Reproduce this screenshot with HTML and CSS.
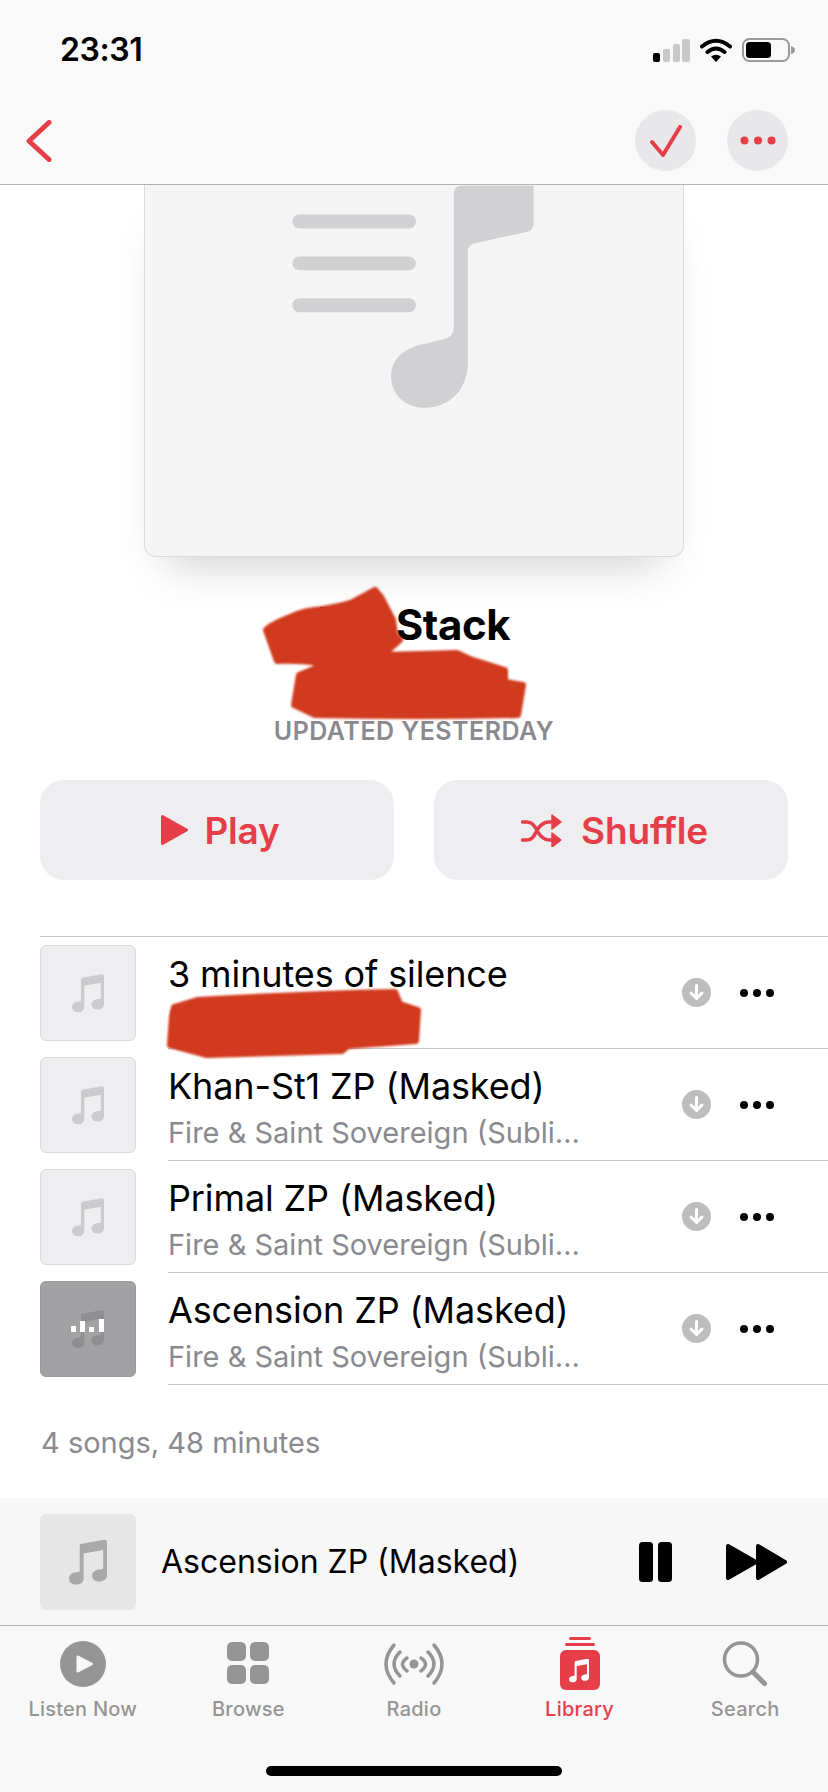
FILE: index.html
```html
<!DOCTYPE html>
<html lang="en">
<head>
<meta charset="utf-8">
<title>Stack</title>
<link rel="stylesheet" href="styles.css">
</head>
<body>
<svg class="defs" width="0" height="0" aria-hidden="true">
  <symbol id="note" viewBox="0 0 32 38">
    <path d="M9 5.500Q9 4 10.500 3.700L29.500 .2Q32 0 32 2V30C32 33.500 29 35.500 25.500 35.500C22 35.500 19.500 33.500 19.500 30.500C19.500 27.500 22 25.800 25 25.300L28 24.800C28.600 24.700 28.800 24.400 28.800 23.800V8.800L12.300 11.800V33C12.300 36 9.500 38 6.200 38C2.700 38 0 36 0 33C0 30 2.500 28.200 5.500 27.700L8.300 27.200C8.800 27.100 9 26.800 9 26.300Z"/>
  </symbol>
</svg>
<div class="app">
  <header class="top">
    <div class="status">
      <span class="time">23:31</span>
      <div class="status-icons">
        <svg class="signal" viewBox="0 0 37 23"><rect x="0" y="14" width="7" height="9" rx="2" fill="#000"/><rect x="10" y="10" width="7" height="13" rx="2" fill="#c8c8c8"/><rect x="20" y="5" width="7" height="18" rx="2" fill="#c8c8c8"/><rect x="29" y="0" width="8" height="23" rx="2" fill="#c8c8c8"/></svg>
        <svg class="wifi" viewBox="0 0 32 24"><path d="M2 8.500Q16-3 30 8.500M7.500 14Q16 7 24.500 14" fill="none" stroke="#000" stroke-width="4" stroke-linecap="round"/><path d="M11 18.500Q16 15 21 18.500L16 24Z" fill="#000"/></svg>
        <svg class="battery" viewBox="0 0 53 24"><rect x="1" y="1" width="46" height="22" rx="6.500" fill="none" stroke="#9a9a9a" stroke-width="2"/><rect x="4" y="4" width="25" height="16" rx="3.500" fill="#000"/><path d="M49 8Q53 9 53 12Q53 15 49 16Z" fill="#9a9a9a"/></svg>
      </div>
    </div>
    <nav class="nav">
      <svg class="back" viewBox="0 0 26 42"><path d="M23 2.500L3 21L23 39.500" fill="none" stroke="#e63e49" stroke-width="5" stroke-linecap="round" stroke-linejoin="round"/></svg>
      <div class="nav-actions">
        <span class="round-btn"><svg class="check" viewBox="0 0 32 32"><path d="M2 17L13 30L30 2" fill="none" stroke="#e63e49" stroke-width="4" stroke-linecap="round" stroke-linejoin="round"/></svg></span>
        <span class="round-btn"><svg class="nav-dots" viewBox="0 0 36 9"><circle cx="4.500" cy="4.500" r="4"/><circle cx="18" cy="4.500" r="4"/><circle cx="31.500" cy="4.500" r="4"/></svg></span>
      </div>
    </nav>
  </header>

  <main class="content">
    <div class="art">
      <svg class="art-icon" viewBox="0 0 540 372">
        <rect x="148" y="29" width="124" height="14" rx="7"/>
        <rect x="148" y="71" width="124" height="14" rx="7"/>
        <rect x="148" y="113" width="124" height="14" rx="7"/>
        <path d="M310 8Q310 0 318 0H390V38Q390 44 385 46L330 58Q324 60 324 66V178C324 205 305 223 281 223C262 223 247 210 247 192C247 175 258 166 272 161C282 158 295 156 303 153C308 151 310 147 310 140Z"/>
      </svg>
    </div>
    <h1 class="title"><span class="title-mark"></span>Stack</h1>
    <p class="updated">UPDATED YESTERDAY</p>
    <div class="actions">
      <button class="action"><svg class="play-ic" viewBox="0 0 27 30"><path d="M1.500 1.500L25.500 15L1.500 28.500Z" stroke="#e63e49" stroke-width="3" stroke-linejoin="round"/></svg>Play</button>
      <button class="action"><svg class="shuffle-ic" viewBox="0 0 41 33"><path d="M1.500 8H6C11 8 13 11 16 16.500C19 22 22 26 28 26H33M1.500 26H6C11 26 13 22 16 16.500C19 11 22 8 28 8H33" fill="none" stroke="#e63e49" stroke-width="3.500" stroke-linecap="round"/><path d="M31 1L40 8L31 15ZM31 19L40 26L31 33Z" stroke="#e63e49" stroke-width="1.500" stroke-linejoin="round"/></svg>Shuffle</button>
    </div>

    <ul class="tracks">
      <li class="track">
        <span class="thumb"><svg class="thumb-note"><use href="#note"/></svg></span>
        <div class="track-body">
          <div class="track-text"><p class="track-title">3 minutes of silence</p><p class="track-sub">M</p></div>
          <span class="dl"><svg viewBox="0 0 29 29"><circle cx="14.500" cy="14.500" r="14.500" fill="#bdbdbf"/><path d="M14.500 7.500V20M9 15L14.500 20.500L20 15" fill="none" stroke="#fff" stroke-width="3" stroke-linecap="round" stroke-linejoin="round"/></svg></span>
          <svg class="more" viewBox="0 0 34 8"><circle cx="4" cy="4" r="4"/><circle cx="17" cy="4" r="4"/><circle cx="30" cy="4" r="4"/></svg>
        </div>
      </li>
      <li class="track">
        <span class="thumb"><svg class="thumb-note"><use href="#note"/></svg></span>
        <div class="track-body">
          <div class="track-text"><p class="track-title">Khan-St1 ZP (Masked)</p><p class="track-sub">Fire &amp; Saint Sovereign (Subli...</p></div>
          <span class="dl"><svg viewBox="0 0 29 29"><circle cx="14.500" cy="14.500" r="14.500" fill="#bdbdbf"/><path d="M14.500 7.500V20M9 15L14.500 20.500L20 15" fill="none" stroke="#fff" stroke-width="3" stroke-linecap="round" stroke-linejoin="round"/></svg></span>
          <svg class="more" viewBox="0 0 34 8"><circle cx="4" cy="4" r="4"/><circle cx="17" cy="4" r="4"/><circle cx="30" cy="4" r="4"/></svg>
        </div>
      </li>
      <li class="track">
        <span class="thumb"><svg class="thumb-note"><use href="#note"/></svg></span>
        <div class="track-body">
          <div class="track-text"><p class="track-title">Primal ZP (Masked)</p><p class="track-sub">Fire &amp; Saint Sovereign (Subli...</p></div>
          <span class="dl"><svg viewBox="0 0 29 29"><circle cx="14.500" cy="14.500" r="14.500" fill="#bdbdbf"/><path d="M14.500 7.500V20M9 15L14.500 20.500L20 15" fill="none" stroke="#fff" stroke-width="3" stroke-linecap="round" stroke-linejoin="round"/></svg></span>
          <svg class="more" viewBox="0 0 34 8"><circle cx="4" cy="4" r="4"/><circle cx="17" cy="4" r="4"/><circle cx="30" cy="4" r="4"/></svg>
        </div>
      </li>
      <li class="track">
        <span class="thumb thumb-active">
          <svg class="thumb-note"><use href="#note"/></svg>
          <svg class="eq" viewBox="0 0 33 13"><rect x="0" y="7" width="5" height="6"/><rect x="9" y="2" width="5" height="11"/><rect x="18" y="8" width="5" height="5"/><rect x="28" y="0" width="5" height="13"/></svg>
        </span>
        <div class="track-body">
          <div class="track-text"><p class="track-title">Ascension ZP (Masked)</p><p class="track-sub">Fire &amp; Saint Sovereign (Subli...</p></div>
          <span class="dl"><svg viewBox="0 0 29 29"><circle cx="14.500" cy="14.500" r="14.500" fill="#bdbdbf"/><path d="M14.500 7.500V20M9 15L14.500 20.500L20 15" fill="none" stroke="#fff" stroke-width="3" stroke-linecap="round" stroke-linejoin="round"/></svg></span>
          <svg class="more" viewBox="0 0 34 8"><circle cx="4" cy="4" r="4"/><circle cx="17" cy="4" r="4"/><circle cx="30" cy="4" r="4"/></svg>
        </div>
      </li>
    </ul>
    <p class="summary">4 songs, 48 minutes</p>
  </main>

  <section class="mini">
    <span class="mini-thumb"><svg class="mini-note"><use href="#note"/></svg></span>
    <span class="mini-title">Ascension ZP (Masked)</span>
    <svg class="pause" viewBox="0 0 33 40"><rect x="0" y="0" width="14" height="40" rx="3.500"/><rect x="19" y="0" width="14" height="40" rx="3.500"/></svg>
    <svg class="forward" viewBox="0 0 61 36"><path d="M2 2L30 18L2 34ZM32 2L59 18L32 34Z" stroke="#000" stroke-width="4" stroke-linejoin="round"/></svg>
  </section>

  <footer class="tabs">
    <div class="tab">
      <svg class="tab-ic" viewBox="0 0 60 60"><circle cx="30" cy="30" r="23"/><path d="M24.500 22.500L39 30L24.500 37.500Z" fill="#f8f8f8" stroke="#f8f8f8" stroke-width="2" stroke-linejoin="round"/></svg>
      <span>Listen Now</span>
    </div>
    <div class="tab">
      <svg class="tab-ic" viewBox="0 0 60 60"><rect x="9" y="8" width="19" height="19" rx="5"/><rect x="32" y="8" width="19" height="19" rx="5"/><rect x="9" y="31" width="19" height="19" rx="5"/><rect x="32" y="31" width="19" height="19" rx="5"/></svg>
      <span>Browse</span>
    </div>
    <div class="tab">
      <svg class="tab-ic" viewBox="0 0 60 60"><circle cx="30" cy="30" r="4.500"/><path d="M10 11Q-6 30 10 49M16 18Q4 30 16 42M23 24Q14 30 23 37M50 11Q66 30 50 49M44 18Q56 30 44 42M37 24Q46 30 37 37" fill="none" stroke="#959595" stroke-width="3.500" stroke-linecap="round"/></svg>
      <span>Radio</span>
    </div>
    <div class="tab tab-on">
      <svg class="tab-ic" viewBox="0 0 60 60"><rect x="19" y="3" width="22" height="3" rx="1.500"/><rect x="15" y="9" width="30" height="3" rx="1.500"/><rect x="10" y="16" width="40" height="40" rx="6"/><svg x="19" y="24" width="20" height="25" viewBox="0 0 32 38" fill="#fff"><use href="#note"/></svg></svg>
      <span>Library</span>
    </div>
    <div class="tab">
      <svg class="tab-ic" viewBox="0 0 60 60"><circle cx="26" cy="25.500" r="16.500" fill="none" stroke="#959595" stroke-width="3.500"/><path d="M38 38L49.500 49.500" stroke="#959595" stroke-width="5" stroke-linecap="round"/></svg>
      <span>Search</span>
    </div>
    <div class="home-bar"></div>
  </footer>

  <svg class="peek" viewBox="0 0 828 1792" aria-hidden="true"><rect x="320" y="607" width="9" height="6"/></svg>
  <svg class="scribbles" viewBox="0 0 828 1792" aria-hidden="true">
    <path d="M266 630Q270 625 290 617Q305 610 323 609Q340 606 353 602L375 590L381 597L393 620L395 635L400 640L383 655Q420 654 457 653L470 659L505 670V682L523 685L518 715Q420 717 315 715L294 705L299 675L333 661L318 663Q300 660 277 661Z"/>
    <path d="M172 1017L174 1007L197 1000Q300 994 395 992L400 1004L418 1010L416 1041L348 1046L342 1051L207 1055L170 1045Z"/>
  </svg>
</div>
</body>
</html>
```

FILE: styles.css
```css
* { box-sizing: border-box; }
html, body { margin: 0; padding: 0; }
body { font-family: Inter, "Liberation Sans", sans-serif; background: #fff; color: #000; }
p, h1, ul { margin: 0; padding: 0; }
.defs { position: absolute; }

.app { position: relative; width: 828px; height: 1792px; display: flex; flex-direction: column; overflow: hidden; background: #fff; }

.top { height: 185px; flex: none; background: #f9f9f9; border-bottom: 1px solid #b4b4b4; position: relative; z-index: 2; }
.status { display: flex; justify-content: space-between; align-items: center; padding: 32px 33px 0 60px; height: 68px; }
.time { font-size: 32px; font-weight: 600; line-height: 36px; letter-spacing: -0.4px; }
.status-icons { display: flex; align-items: center; gap: 10px; }
.signal { width: 37px; height: 23px; margin-top: 1px; }
.wifi { width: 32px; height: 24px; }
.battery { width: 53px; height: 24px; }

.nav { display: flex; justify-content: space-between; align-items: center; height: 61px; margin-top: 42px; padding: 0 40px 0 26px; }
.back { width: 26px; height: 42px; }
.nav-actions { display: flex; gap: 31px; }
.round-btn { width: 61px; height: 61px; border-radius: 50%; background: #e8e8ea; display: flex; align-items: center; justify-content: center; }
.check { width: 32px; height: 32px; }
.nav-dots { width: 36px; height: 9px; fill: #e63e49; }

.content { height: 1313px; flex: none; overflow: hidden; }
.art { width: 540px; height: 372px; margin: 0 auto; background: #f5f5f5; border: 1px solid #dadada; border-top: 0; border-radius: 0 0 12px 12px; box-shadow: 0 28px 45px -22px rgba(0, 0, 0, 0.2); }
.art-icon { display: block; width: 538px; height: 372px; fill: #d1d1d3; overflow: visible; }

.title { margin-top: 43px; font-size: 42px; font-weight: 700; line-height: 50px; text-align: center; letter-spacing: -0.4px; }
.title-mark { display: inline-block; width: 78px; }
.updated { margin-top: 66px; font-size: 25px; font-weight: 600; line-height: 30px; text-align: center; color: #8a8a8e; letter-spacing: 0.5px; }

.actions { display: grid; grid-template-columns: 354px 354px; gap: 40px; padding: 0 40px; margin-top: 34px; }
.action { height: 100px; border: 0; border-radius: 24px; background: #eeeef0; color: #e63e49; font: 600 37px/1 Inter, "Liberation Sans", sans-serif; letter-spacing: -0.2px; display: flex; align-items: center; justify-content: center; gap: 16px; padding: 0 0 0 7px; }
.play-ic { width: 27px; height: 30px; fill: #e63e49; }
.shuffle-ic { width: 41px; height: 33px; margin-right: 3px; fill: #e63e49; }

.tracks { list-style: none; margin: 56px 0 0 40px; border-top: 1px solid #c8c8ca; }
.track { display: flex; align-items: stretch; height: 112px; }
.thumb { width: 96px; height: 96px; flex: none; margin-top: 8px; background: #eeeef0; border: 1px solid #dcdcde; border-radius: 6px; display: flex; align-items: center; justify-content: center; position: relative; }
.thumb-note { width: 32px; height: 38px; fill: #cbcbcd; }
.thumb-active { background: #a2a2a4; border-color: #98989a; }
.thumb-active .thumb-note { fill: #8f8f91; }
.eq { position: absolute; left: 30px; top: 37px; width: 33px; height: 13px; fill: #fff; }
.track-body { flex: 1; margin-left: 32px; display: flex; align-items: center; border-bottom: 1px solid #c8c8ca; padding-right: 54px; }
.track-text { flex: 1; min-width: 0; align-self: flex-start; padding-top: 15px; }
.track-title { font-size: 36px; line-height: 44px; white-space: nowrap; letter-spacing: -0.12px; }
.track-sub { margin-top: 8px; font-size: 29px; line-height: 34px; color: #8a8a8e; white-space: nowrap; }
.dl { width: 29px; height: 29px; flex: none; margin-right: 29px; }
.dl svg { display: block; width: 29px; height: 29px; }
.more { width: 34px; height: 8px; flex: none; fill: #000; }

.summary { margin: 38px 0 0 41px; font-size: 29px; line-height: 40px; color: #8a8a8e; }

.mini { height: 128px; flex: none; background: #f7f7f7; border-bottom: 1px solid #b4b4b4; display: flex; align-items: center; padding: 0 41px 0 40px; }
.mini-thumb { width: 96px; height: 96px; flex: none; background: #e6e6e6; border-radius: 6px; display: flex; align-items: center; justify-content: center; }
.mini-note { width: 38px; height: 46px; fill: #a9a9aa; }
.mini-title { flex: 1; margin-left: 25px; font-size: 32px; line-height: 40px; white-space: nowrap; }
.pause { width: 33px; height: 40px; fill: #000; margin-right: 54px; }
.forward { width: 61px; height: 36px; fill: #000; }

.tabs { flex: 1; background: #f8f8f8; display: grid; grid-template-columns: repeat(5, 1fr); align-content: start; padding-top: 8px; position: relative; }
.tab { display: flex; flex-direction: column; align-items: center; color: #959595; fill: #959595; font-size: 20px; font-weight: 500; line-height: 24px; letter-spacing: 0.25px; }
.tab-ic { width: 60px; height: 60px; margin-bottom: 3px; overflow: visible; }
.tab-on { color: #e63e49; fill: #e63e49; }
.home-bar { position: absolute; left: 266px; top: 140px; width: 296px; height: 10px; border-radius: 5px; background: #000; }

.peek { position: absolute; inset: 0; width: 828px; height: 1792px; fill: #000; pointer-events: none; z-index: 1; }
.scribbles { position: absolute; inset: 0; width: 828px; height: 1792px; fill: #d13a1e; stroke: #d13a1e; stroke-width: 6; stroke-linejoin: round; filter: blur(1px); pointer-events: none; z-index: 1; }
```
